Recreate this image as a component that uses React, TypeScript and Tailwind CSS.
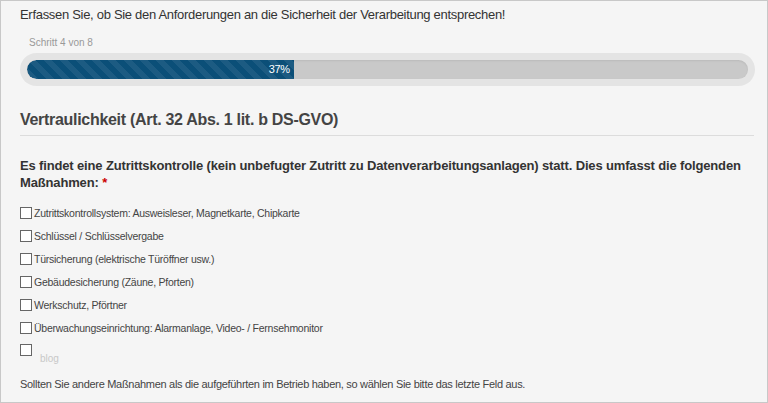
import React from "react";

const options = [
  "Zutrittskontrollsystem: Ausweisleser, Magnetkarte, Chipkarte",
  "Schlüssel / Schlüsselvergabe",
  "Türsicherung (elektrische Türöffner usw.)",
  "Gebäudesicherung (Zäune, Pforten)",
  "Werkschutz, Pförtner",
  "Überwachungseinrichtung: Alarmanlage, Video- / Fernsehmonitor",
];

function Box() {
  return <span className="inline-block h-[12px] w-[12px] shrink-0 border border-[#666] bg-white" />;
}

export default function App() {
  const pct = 37;
  return (
    <div
      className="h-[403px] w-[768px] overflow-hidden border border-[#c8c8c8] bg-[#f5f5f5] text-[#333]"
      style={{ fontFamily: '"Liberation Sans", Arial, sans-serif' }}
    >
      <div className="pl-[19px] pr-[12px] pt-[5px]">
        <p className="text-[13px] leading-[18px] tracking-[-0.3px] text-[#333]">
          Erfassen Sie, ob Sie den Anforderungen an die Sicherheit der Verarbeitung entsprechen!
        </p>
        <p className="mt-[12px] pl-[9px] text-[10px] leading-[14px] text-[#999]">Schritt 4 von 8</p>

        <div className="mt-[3px] rounded-full bg-[#e4e4e4] p-[7px]">
          <div className="h-[19px] overflow-hidden rounded-full bg-[#c9c9c9] shadow-[inset_0_1px_2px_rgba(0,0,0,0.08)]">
            <div
              className="flex h-full items-center justify-end rounded-l-full pr-[4px] text-[11px] tracking-[-0.3px] text-white"
              style={{
                width: `${pct}%`,
                backgroundColor: "#0b4f78",
                backgroundImage:
                  "linear-gradient(45deg, rgba(255,255,255,0.07) 25%, transparent 25%, transparent 50%, rgba(255,255,255,0.07) 50%, rgba(255,255,255,0.07) 75%, transparent 75%, transparent)",
                backgroundSize: "16px 16px",
              }}
            >
              {pct}%
            </div>
          </div>
        </div>

        <h2 className="mt-[24px] text-[16px] font-bold leading-[20px] tracking-[-0.3px] text-[#444]">
          Vertraulichkeit (Art. 32 Abs. 1 lit. b DS-GVO)
        </h2>
        <div className="mr-[1px] mt-[5px] h-px bg-[#dcdcdc]" />

        <p className="mt-[21px] text-[13px] font-bold leading-[17px] tracking-[-0.15px] text-[#333]">
          Es findet eine Zutrittskontrolle (kein unbefugter Zutritt zu Datenverarbeitungsanlagen) statt. Dies umfasst die folgenden
          Maßnahmen: <span className="text-[#c00]">*</span>
        </p>

        <ul className="mt-[15px] flex flex-col gap-[9px]">
          {options.map((o) => (
            <li key={o} className="flex h-[14px] items-center gap-[2px] text-[10.5px] leading-[14px] tracking-[-0.25px] text-[#444]">
              <Box />
              <span>{o}</span>
            </li>
          ))}
          <li className="flex h-[14px] items-start gap-[8px] text-[11px] leading-[14px]">
            <Box />
            <span className="mt-[8px] text-[10px] text-[#c8c8c8]">blog</span>
          </li>
        </ul>

        <p className="mt-[19px] text-[11px] leading-[14px] tracking-[-0.3px] text-[#444]">
          Sollten Sie andere Maßnahmen als die aufgeführten im Betrieb haben, so wählen Sie bitte das letzte Feld aus.
        </p>
      </div>
    </div>
  );
}
